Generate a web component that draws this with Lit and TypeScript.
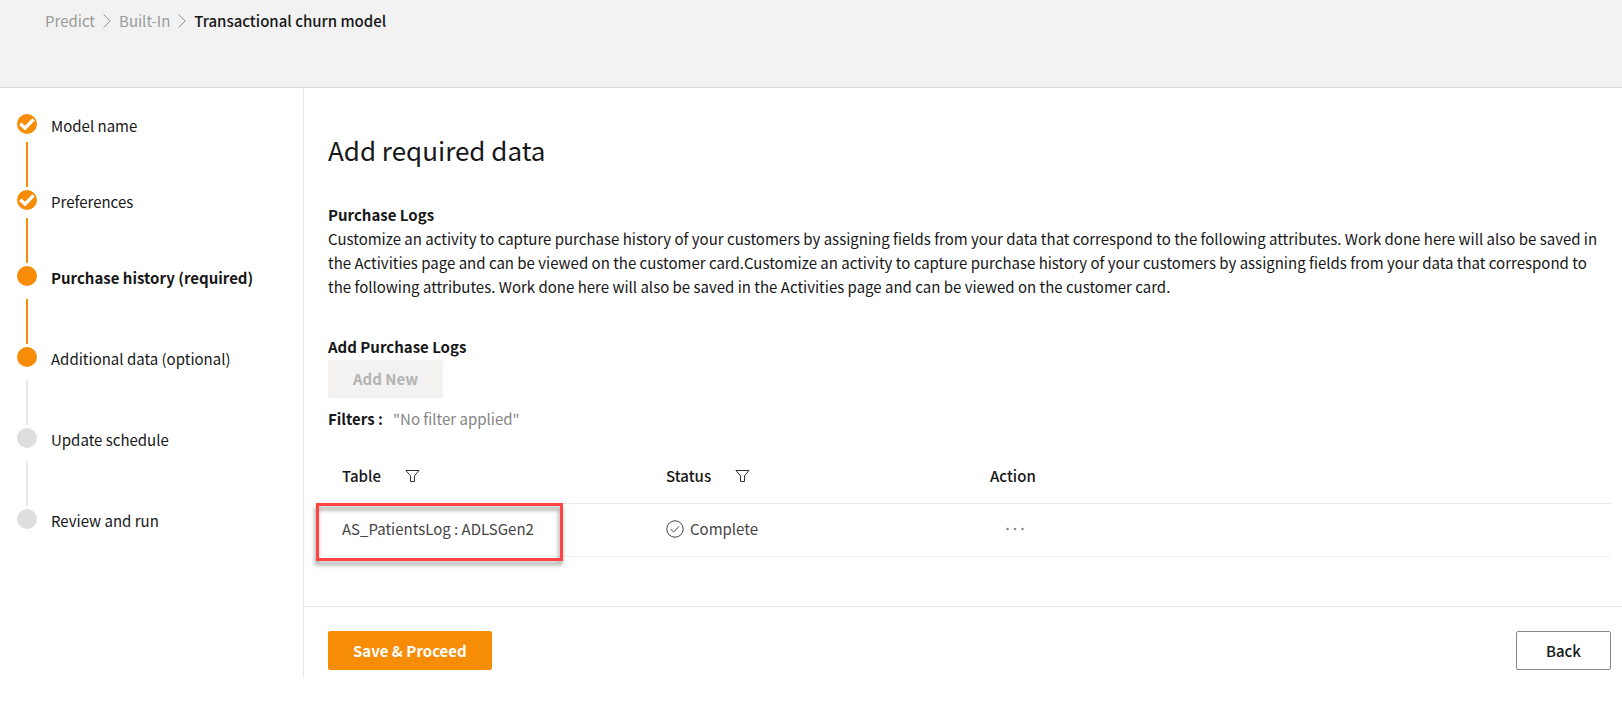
import { LitElement, html, css, svg, nothing } from "lit";
import { customElement, property } from "lit/decorators.js";
import { classMap } from "lit/directives/class-map.js";

type StepState = "done" | "reached" | "pending";

interface Step {
  label: string;
  state: StepState;
  current?: boolean;
}

interface LogRow {
  table: string;
  status: string;
  highlighted?: boolean;
}

const STEPS: Step[] = [
  { label: "Model name", state: "done" },
  { label: "Preferences", state: "done" },
  { label: "Purchase history (required)", state: "reached", current: true },
  { label: "Additional data (optional)", state: "reached" },
  { label: "Update schedule", state: "pending" },
  { label: "Review and run", state: "pending" },
];

const ROWS: LogRow[] = [
  { table: "AS_PatientsLog : ADLSGen2", status: "Complete", highlighted: true },
];

const chevron = html`<svg class="chevron" width="8" height="14" viewBox="0 0 8 14" fill="none" stroke="currentColor" aria-hidden="true">
  <path d="M.6 .5 7.2 7 .6 13.5" />
</svg>`;

const funnel = html`<svg width="15" height="14" viewBox="0 0 15 14" fill="none" stroke="currentColor" aria-hidden="true">
  <path d="M.9 1.5H14L9.5 6.8V12.5H5.5V6.8Z" />
</svg>`;

@customElement("step-list")
export class StepList extends LitElement {
  @property({ attribute: false }) steps: Step[] = [];

  static styles = css`
    :host { display: block; }
    .steps { list-style: none; margin: 0; padding: 0; }
    .step { display: flex; gap: 14px; }
    .rail { flex: none; width: 20px; display: flex; flex-direction: column; align-items: center; }
    .dot { display: block; width: 20px; height: 20px; border-radius: 50%; background: #f78c06; }
    .line { width: 2px; height: 45px; margin: 13px 0 3px; background: #f78c06; }
    .done .line { margin-top: 8px; }
    .pending .dot { background: #dedede; }
    .line.ahead { background: #eaeaea; }
    .label { line-height: 23px; color: #171717; }
    .current .label { font-weight: 700; }
  `;

  render() {
    return html`<ol class="steps">
      ${this.steps.map((step, i) => {
        const next = this.steps[i + 1];
        return html`<li
          class=${classMap({ step: true, [step.state]: true, current: !!step.current })}
          aria-current=${step.current ? "step" : nothing}
        >
          <span class="rail">
            <span class="dot">
              ${step.state === "done"
                ? html`<svg width="20" height="20" viewBox="0 0 20 20" fill="none" stroke="#fff" stroke-width="3.4" aria-hidden="true">
                    ${svg`<path d="M3.3 9.8 8 14.1 16.6 5.4" />`}
                  </svg>`
                : nothing}
            </span>
            ${next
              ? html`<span class=${classMap({ line: true, ahead: next.state === "pending" })}></span>`
              : nothing}
          </span>
          <span class="label">${step.label}</span>
        </li>`;
      })}
    </ol>`;
  }
}

@customElement("app-root")
export class AppRoot extends LitElement {
  static styles = css`
    :host {
      display: block;
      background: #fff;
      color: #171717;
      font: 15px/24px "Noto Sans CJK SC", "Noto Sans", sans-serif;
    }
    .header { height: 87px; background: #f2f2f2; border-bottom: 1px solid #dcdcdc; }
    .crumbs {
      display: flex; align-items: center; gap: 8px;
      list-style: none; margin: 0; padding: 9px 45px;
    }
    .crumbs li { display: flex; align-items: center; gap: 8px; }
    .crumbs a { color: #9a9a9a; text-decoration: none; }
    .crumbs .here { font-weight: 500; }
    .chevron { color: #8c8c8c; }
    .layout { display: grid; grid-template-columns: 304px minmax(0, 1fr); }
    .side { padding: 26px 17px; border-right: 1px solid #e8e8e8; }
    .content { padding: 42px 11px 49px 24px; }
    h1 { margin: 0; font-size: 26px; line-height: 40px; font-weight: 400; }
    h2 { margin: 0; font-size: 15px; line-height: 24px; font-weight: 700; }
    .purchase { margin-top: 33px; }
    .purchase p { margin: 0; }
    .logs { margin-top: 36px; }
    button { font: inherit; cursor: pointer; }
    .btn { padding: 6px 24px; border: 1px solid transparent; border-radius: 2px; font-weight: 700; }
    .btn:disabled { display: block; margin-top: 1px; background: #f3f2f1; color: #b3b3b3; cursor: default; }
    .primary { background: #f78c06; color: #fff; }
    .secondary { padding: 6px 29px; background: #fff; border-color: #8a8886; color: #171717; font-weight: 500; }
    .filters { display: flex; gap: 10px; margin: 9px 0 20px; }
    .filters dt { font-weight: 700; }
    .filters dd { margin: 0; color: #858585; }
    table { width: 100%; border-collapse: collapse; table-layout: fixed; }
    .col { width: 324px; }
    th, td { height: 50px; padding: 0 14px 2px; border-bottom: 1px solid #e8e8e8; text-align: left; }
    td { color: #444; border-color: #f0f0f0; }
    th { font-weight: 500; }
    .head, .status { display: flex; align-items: center; }
    .head { gap: 24px; }
    .status { gap: 6px; }
    .icon-btn { display: flex; padding: 0; border: 0; background: none; color: #333; }
    .more { margin-left: 15px; color: #888; }
    .marked { position: relative; }
    .marker {
      position: absolute; inset: -1px auto -5px -12px; width: 247px;
      box-sizing: border-box; border: 3px solid #ff4343;
      filter: drop-shadow(-1px 4px 2px rgba(0, 0, 0, 0.4)); pointer-events: none;
    }
    .footer {
      display: flex; justify-content: space-between;
      padding: 24px 11px 8px 24px; border-top: 1px solid #e8e8e8;
    }
    .footer .btn { min-height: 39px; }
  `;

  render() {
    return html`
      <header class="header">
        <nav aria-label="Breadcrumb">
          <ol class="crumbs">
            <li><a href="#predict">Predict</a>${chevron}</li>
            <li><a href="#built-in">Built-In</a>${chevron}</li>
            <li class="here" aria-current="page">Transactional churn model</li>
          </ol>
        </nav>
      </header>
      <div class="layout">
        <aside class="side"><step-list .steps=${STEPS}></step-list></aside>
        <main>
          <div class="content">
            <h1>Add required data</h1>
            <section class="purchase">
              <h2>Purchase Logs</h2>
              <p>
                Customize an activity to capture purchase history of your customers by assigning fields from your data
                that correspond to the following attributes. Work done here will also be saved in the Activities page
                and can be viewed on the customer card.Customize an activity to capture purchase history of your
                customers by assigning fields from your data that correspond to the following attributes. Work done
                here will also be saved in the Activities page and can be viewed on the customer card.
              </p>
            </section>
            <section class="logs">
              <h2>Add Purchase Logs</h2>
              <button class="btn" type="button" disabled>Add New</button>
              <dl class="filters"><dt>Filters :</dt><dd>"No filter applied"</dd></dl>
              <table>
                <colgroup><col class="col" /><col class="col" /><col /></colgroup>
                <thead>
                  <tr>
                    <th scope="col"><div class="head">Table<button class="icon-btn" type="button" aria-label="Filter by table">${funnel}</button></div></th>
                    <th scope="col"><div class="head">Status<button class="icon-btn" type="button" aria-label="Filter by status">${funnel}</button></div></th>
                    <th scope="col">Action</th>
                  </tr>
                </thead>
                <tbody>
                  ${ROWS.map(
                    (row) => html`<tr>
                      <td class=${classMap({ marked: !!row.highlighted })}>
                        ${row.table}${row.highlighted ? html`<span class="marker"></span>` : nothing}
                      </td>
                      <td>
                        <div class="status">
                          <svg width="18" height="18" viewBox="0 0 18 18" fill="none" stroke="currentColor" aria-hidden="true">
                            <circle cx="9" cy="9" r="8.2" />
                            <path d="M4.7 9.2 7.6 12 13.2 6.3" />
                          </svg>
                          ${row.status}
                        </div>
                      </td>
                      <td>
                        <button class="icon-btn more" type="button" aria-label="More actions">
                          <svg width="20" height="4" viewBox="0 0 20 4" fill="currentColor" aria-hidden="true">
                            <circle cx="2.5" cy="2" r="1.3" /><circle cx="10" cy="2" r="1.3" /><circle cx="17.5" cy="2" r="1.3" />
                          </svg>
                        </button>
                      </td>
                    </tr>`
                  )}
                </tbody>
              </table>
            </section>
          </div>
          <footer class="footer">
            <button class="btn primary" type="button">Save &amp; Proceed</button>
            <button class="btn secondary" type="button">Back</button>
          </footer>
        </main>
      </div>
    `;
  }
}
